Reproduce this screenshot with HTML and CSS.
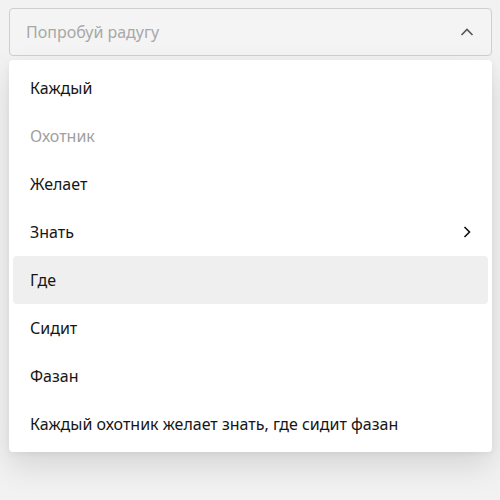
FILE: index.html
```html
<!DOCTYPE html>
<html lang="ru">
<head>
<meta charset="utf-8">
<link rel="stylesheet" href="styles.css">
</head>
<body>
<div class="select">
  <div class="trigger">
    <span class="placeholder">Попробуй радугу</span>
    <svg class="chev-up" width="14" height="8" viewBox="0 0 14 8"><path d="M1.5 7 L7 1.5 L12.5 7" fill="none" stroke="#555" stroke-width="1.6"/></svg>
  </div>
  <ul class="menu">
    <li class="item">Каждый</li>
    <li class="item disabled">Охотник</li>
    <li class="item">Желает</li>
    <li class="item">Знать<svg class="chev-right" width="8" height="12" viewBox="0 0 8 12"><path d="M1.5 1 L6.5 6 L1.5 11" fill="none" stroke="#111" stroke-width="1.6"/></svg></li>
    <li class="item active">Где</li>
    <li class="item">Сидит</li>
    <li class="item">Фазан</li>
    <li class="item">Каждый охотник желает знать, где сидит фазан</li>
  </ul>
</div>
</body>
</html>
```

FILE: styles.css
```css
html, body {
  margin: 0;
  padding: 0;
  background: #f2f2f2;
}
body {
  box-sizing: border-box;
  min-height: 500px;
  padding: 8px 8px 0 9px;
  font-family: "Noto Sans", "Open Sans", sans-serif;
  font-size: 16px;
  color: #161616;
}
.select {
  width: 483px;
  display: flex;
  flex-direction: column;
  gap: 4px;
}
.trigger {
  box-sizing: border-box;
  height: 48px;
  border: 1px solid #cfcfcf;
  border-radius: 4px;
  background: #f4f4f4;
  display: flex;
  align-items: center;
  justify-content: space-between;
  padding: 0 17px 0 16px;
}
.placeholder {
  color: #a8a8a8;
}
.menu {
  list-style: none;
  margin: 0;
  padding: 4px;
  background: #fff;
  border-radius: 4px;
  box-shadow: 0 14px 32px rgba(0,0,0,0.12), 0 2px 6px rgba(0,0,0,0.05);
}
.item {
  height: 48px;
  display: flex;
  align-items: center;
  justify-content: space-between;
  padding: 0 17px 0 17px;
  border-radius: 4px;
}
.item.disabled {
  color: #a0a0a0;
}
.item.active {
  background: #efefef;
}
```
